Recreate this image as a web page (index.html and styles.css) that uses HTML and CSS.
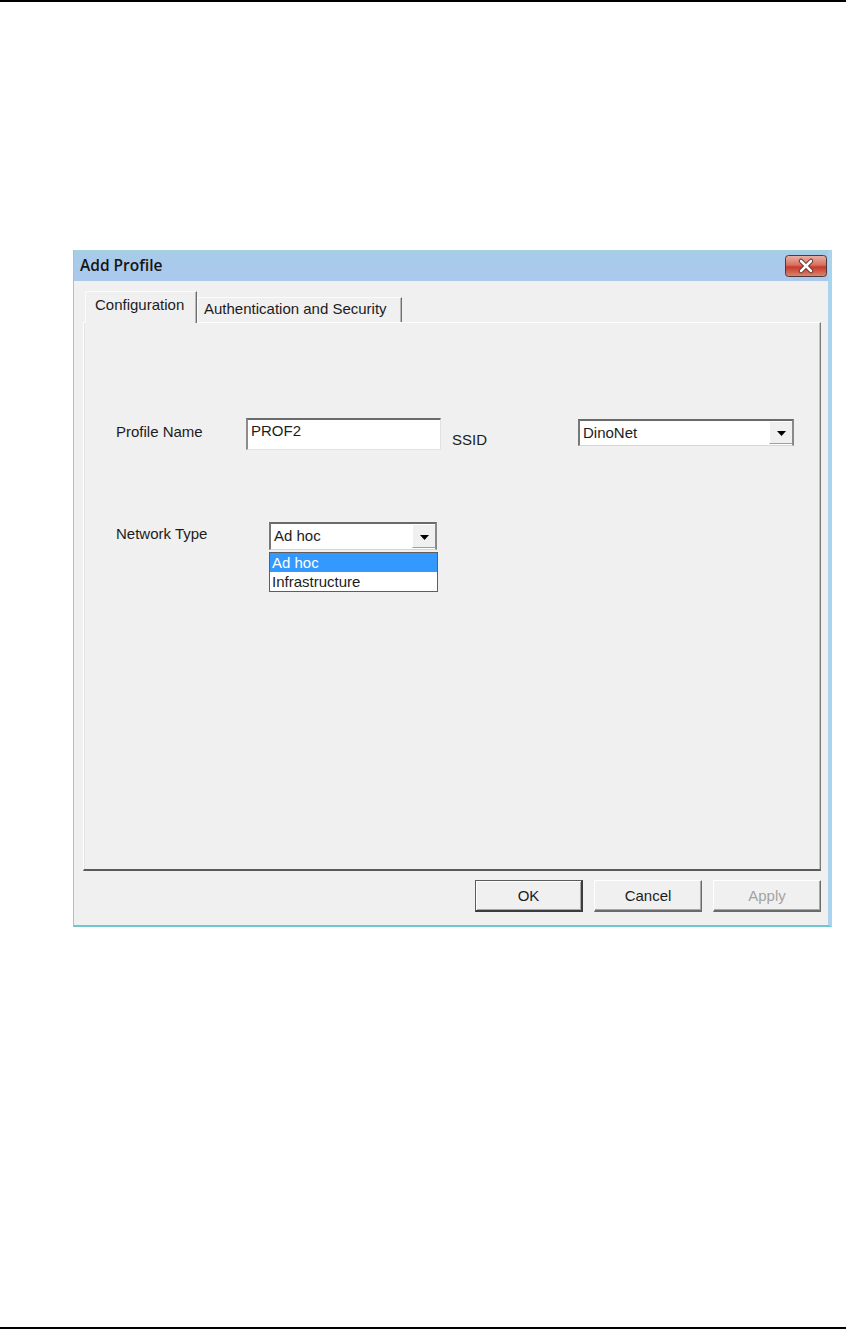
FILE: index.html
```html
<!DOCTYPE html>
<html lang="en">
<head>
    <meta charset="UTF-8">
    <title>Add Profile</title>
    <link rel="stylesheet" href="styles.css">
</head>
<body>
    <div class="page">
        <div class="dialog">
            <div class="titlebar">
                <span class="title">Add Profile</span>
                <span class="close-btn">
                    <svg width="42" height="22" viewBox="0 0 42 22">
                        <defs>
                            <linearGradient id="redGrad" x1="0" y1="0" x2="0" y2="1">
                                <stop offset="0" stop-color="#e9b2a8"/>
                                <stop offset="0.45" stop-color="#d9705f"/>
                                <stop offset="0.55" stop-color="#c8392a"/>
                                <stop offset="1" stop-color="#d98a72"/>
                            </linearGradient>
                        </defs>
                        <rect x="0.5" y="0.5" width="41" height="21" rx="3" fill="url(#redGrad)" stroke="#4d3a3a"/>
                        <path d="M16 6 L26 16 M26 6 L16 16" stroke="#5a2a22" stroke-width="4.5" stroke-linecap="round"/>
                        <path d="M16 6 L26 16 M26 6 L16 16" stroke="#ffffff" stroke-width="2.6" stroke-linecap="round"/>
                    </svg>
                </span>
            </div>

            <div class="tabs">
                <div class="tab tab-active">Configuration</div>
                <div class="tab tab-auth">Authentication and Security</div>
            </div>

            <div class="panel">
                <div class="row row-profile">
                    <span class="field-label label-profile">Profile Name</span>
                    <div class="textbox">PROF2</div>
                    <span class="field-label label-ssid">SSID</span>
                    <div class="combo combo-ssid">
                        <span class="combo-value">DinoNet</span>
                        <span class="combo-arrow">
                            <svg width="9" height="5" viewBox="0 0 9 5"><path d="M0 0 H9 L4.5 5 Z" fill="#000"/></svg>
                        </span>
                    </div>
                </div>

                <div class="row row-network">
                    <span class="field-label label-network">Network Type</span>
                    <div class="combo-wrap">
                        <div class="combo combo-network">
                            <span class="combo-value">Ad hoc</span>
                            <span class="combo-arrow">
                                <svg width="9" height="5" viewBox="0 0 9 5"><path d="M0 0 H9 L4.5 5 Z" fill="#000"/></svg>
                            </span>
                        </div>
                        <ul class="listbox">
                            <li class="selected">Ad hoc</li>
                            <li>Infrastructure</li>
                        </ul>
                    </div>
                </div>
            </div>

            <div class="buttons">
                <button type="button" class="btn btn-default">OK</button>
                <button type="button" class="btn">Cancel</button>
                <button type="button" class="btn btn-disabled">Apply</button>
            </div>
        </div>
    </div>
</body>
</html>
```

FILE: styles.css
```css
:root {
    --face-color: #f0f0f0;
    --text-color: #1c1c1c;
    --highlight-color: #3399ff;
}

body {
    margin: 0;
    padding: 0;
    background: #ffffff;
    font-family: "Liberation Sans", Arial, sans-serif;
    font-size: 15px;
    color: var(--text-color);
}

.page {
    height: 1329px;
    box-sizing: border-box;
    border-top: 2px solid #000;
    border-bottom: 2px solid #000;
    padding-top: 248px;
}

.dialog {
    width: 759px;
    height: 677px;
    margin-left: 73px;
    box-sizing: border-box;
    background: var(--face-color);
    border-left: 1px solid #b4bcc4;
    border-right: 4px solid #a9d3ef;
    border-bottom: 2px solid #6ec7cf;
}

/* title bar */

.titlebar {
    height: 31px;
    display: flex;
    align-items: flex-start;
    justify-content: space-between;
    background: linear-gradient(to bottom, #a4d2da 0, #a8cbe9 4px, #abc9ee 100%);
}

.title {
    font-family: "Open Sans", "Liberation Sans", sans-serif;
    font-weight: 600;
    font-size: 15.5px;
    color: #151515;
    margin: 5px 0 0 6px;
    line-height: 20px;
}

.close-btn {
    display: block;
    width: 42px;
    height: 22px;
    margin: 5px 1px 0 0;
}

.close-btn svg {
    display: block;
}

/* tabs */

.tabs {
    height: 41px;
    display: flex;
    align-items: flex-end;
    padding-left: 11px;
}

.tab {
    box-sizing: border-box;
    height: 25px;
    line-height: 22px;
    white-space: nowrap;
    border-top: 1px solid #fbfbfb;
    border-left: 1px solid #fbfbfb;
    border-right: 1px solid #6f6f6f;
    box-shadow: inset -1px 0 0 #b8b8b8;
}

.tab-active {
    position: relative;
    z-index: 1;
    height: 32px;
    width: 112px;
    margin-bottom: -1px;
    padding-left: 9px;
    line-height: 26px;
    background: var(--face-color);
}

.tab-auth {
    width: 205px;
    padding-left: 6px;
    line-height: 21px;
}

/* tab page */

.panel {
    width: 738px;
    height: 549px;
    margin-left: 9px;
    box-sizing: border-box;
    border-top: 1px solid #ffffff;
    border-left: 1px solid #ffffff;
    border-right: 1px solid #7a7a7a;
    border-bottom: 2px solid #5a5a5a;
    box-shadow: inset 1px 0 0 #e4e4e4, inset -1px 0 0 #c4c4c4;
}

.row {
    display: flex;
    align-items: flex-start;
    padding-left: 32px;
}

.row-profile {
    margin-top: 95px;
}

.row-network {
    margin-top: 72px;
}

.field-label {
    display: block;
    line-height: 18px;
    white-space: nowrap;
}

.label-profile {
    width: 130px;
    margin-top: 5px;
}

.label-ssid {
    width: 126px;
    margin: 13px 0 0 11px;
}

.label-network {
    width: 153px;
    margin-top: 3px;
}

.textbox {
    width: 195px;
    height: 32px;
    box-sizing: border-box;
    padding: 2px 3px 1px;
    line-height: 18px;
    background: #ffffff;
    border-top: 2px solid #6b6b6b;
    border-left: 2px solid #8c8c8c;
    border-right: 1px solid #e2e2e2;
    border-bottom: 1px solid #e2e2e2;
}

.combo {
    display: flex;
    align-items: stretch;
    box-sizing: border-box;
    background: #ffffff;
    border-top: 2px solid #6a6a6a;
    border-left: 2px solid #777777;
    border-right: 2px solid #8a8a8a;
    border-bottom: 1px solid #d6d6d6;
}

.combo-ssid {
    width: 216px;
    height: 27px;
    margin-top: 1px;
}

.combo-network {
    width: 168px;
    height: 28px;
}

.combo-value {
    flex: 1;
    padding: 2px 3px 0;
    line-height: 19px;
}

.combo-arrow {
    width: 22px;
    display: flex;
    align-items: center;
    justify-content: center;
    background: var(--face-color);
    border-left: 1px solid #ffffff;
    border-bottom: 1px solid #a0a0a0;
    margin: 1px 0 1px 0;
}

.combo-arrow svg {
    display: block;
    margin-top: 2px;
}

.combo-wrap {
    position: relative;
}

.listbox {
    position: absolute;
    top: 30px;
    left: 0;
    width: 169px;
    box-sizing: border-box;
    margin: 0;
    padding: 0;
    list-style: none;
    background: #ffffff;
    border: 1px solid #5e5e5e;
}

.listbox li {
    height: 19px;
    line-height: 19px;
    padding-left: 2px;
}

.listbox li.selected {
    background: var(--highlight-color);
    color: #ffffff;
}

/* dialog buttons */

.buttons {
    display: flex;
    justify-content: flex-end;
    gap: 11px;
    margin-top: 9px;
    padding-right: 7px;
}

.btn {
    width: 108px;
    height: 32px;
    box-sizing: border-box;
    padding: 0;
    font-family: inherit;
    font-size: 15px;
    color: var(--text-color);
    background: var(--face-color);
    border-top: 1px solid #ffffff;
    border-left: 1px solid #ffffff;
    border-right: 1px solid #6a6a6a;
    border-bottom: 2px solid #6a6a6a;
    box-shadow: inset -1px -1px 0 #a8a8a8;
}

.btn-default {
    border-top: 1px solid #5c5c5c;
    border-left: 1px solid #5c5c5c;
    border-right: 2px solid #3c3c3c;
    border-bottom: 2px solid #3c3c3c;
    box-shadow: inset 1px 1px 0 #ffffff, inset -1px -1px 0 #a8a8a8;
}

.btn-disabled {
    color: #a3a3a3;
}
```
